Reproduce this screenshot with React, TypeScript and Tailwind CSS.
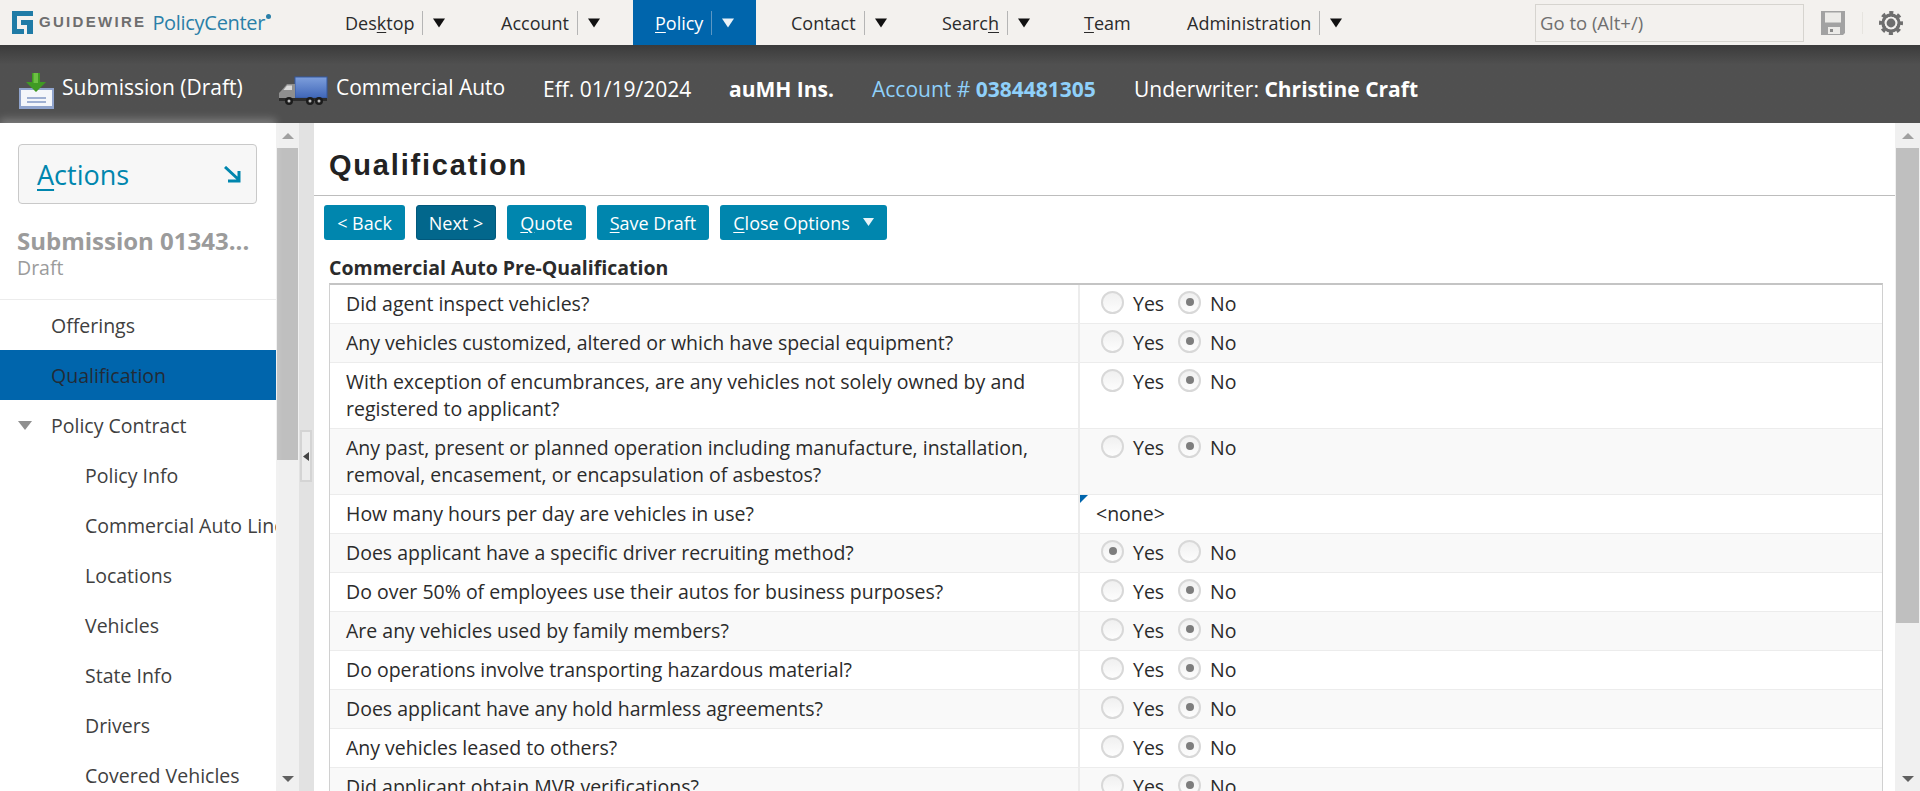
import React from "react";

const font = { fontFamily: '"Open Sans", "Noto Sans", sans-serif' };

function Arrow({ white = false }: { white?: boolean }) {
  return (
    <svg width="12" height="10" viewBox="0 0 12 10" className="block">
      <path d="M0 0.5H12L6 9.5Z" fill={white ? "#eaf2f8" : "#111"} />
    </svg>
  );
}

function NavItem({ pre, u, post, w, menu = true, active = false }: { pre: string; u: string; post: string; w: string; menu?: boolean; active?: boolean }) {
  return (
    <div className={`${w} ${active ? "bg-[#0065ac] text-white" : "text-[#2b2b2b]"} flex h-[45px] shrink-0 items-center text-[18px]`}>
      <span className="whitespace-nowrap pt-[1px]">
        {pre}
        <span className="underline underline-offset-2">{u}</span>
        {post}
      </span>
      {menu && (
        <>
          <span className={`${active ? "bg-[#5c97c4]" : "bg-[#b5b5b5]"} ml-[8px] mr-[10px] h-6 w-px`} />
          <Arrow white={active} />
        </>
      )}
    </div>
  );
}

function GLogo() {
  return (
    <svg width="21" height="23" viewBox="0 0 21 23" className="shrink-0">
      <path d="M0 0H21V5H5V18H12V23H0Z" fill="#1f7ba6" />
      <path d="M9 9H21V23H15V14H9Z" fill="#1f7ba6" />
    </svg>
  );
}

function SubmissionIcon() {
  return (
    <svg width="37" height="37" viewBox="0 0 37 37" className="shrink-0">
      <rect x="1" y="16" width="35" height="21" fill="#8fa3cc" />
      <rect x="3" y="18" width="31" height="16" fill="#f4f6fa" />
      <rect x="9" y="25" width="19" height="2" fill="#9fb0d2" />
      <rect x="9" y="29" width="19" height="2" fill="#9fb0d2" />
      <path d="M14 1H22V10H28L18 20L8 10H14Z" fill="#3f9a23" />
      <path d="M15.5 1H20V11H15.5Z" fill="#6cc043" />
    </svg>
  );
}

function TruckIcon() {
  return (
    <svg width="50" height="29" viewBox="0 0 50 29" className="shrink-0">
      <defs>
        <linearGradient id="box" x1="0" y1="0" x2="0" y2="1">
          <stop offset="0" stopColor="#7e9fdc" />
          <stop offset="1" stopColor="#3f66b8" />
        </linearGradient>
      </defs>
      <rect x="17" y="1" width="32" height="21" fill="url(#box)" stroke="#35589f" strokeWidth="1" />
      <path d="M17 8H9L3 15L1 17V25H17Z" fill="#8f8f8f" />
      <path d="M9 9.5H14V14H5.5Z" fill="#d9d9d9" />
      <rect x="1" y="22" width="48" height="3" fill="#2c2c2c" />
      <circle cx="11" cy="25" r="4" fill="#1b1b1b" />
      <circle cx="11" cy="25" r="1.5" fill="#bbb" />
      <circle cx="32" cy="25" r="4" fill="#1b1b1b" />
      <circle cx="32" cy="25" r="1.5" fill="#bbb" />
      <circle cx="41" cy="25" r="4" fill="#1b1b1b" />
      <circle cx="41" cy="25" r="1.5" fill="#bbb" />
    </svg>
  );
}

function GearIcon() {
  return (
    <svg width="24" height="24" viewBox="0 0 24 24" className="block">
      <circle cx="12" cy="12" r="10.5" fill="none" stroke="#6e6e6e" strokeWidth="3" strokeDasharray="4.12 4.12" strokeDashoffset="2.06" />
      <circle cx="12" cy="12" r="8" fill="none" stroke="#6e6e6e" strokeWidth="3.4" />
      <circle cx="12" cy="12" r="6.3" fill="#f3f1ee" />
      <circle cx="12" cy="12" r="4.4" fill="#6e6e6e" />
    </svg>
  );
}

function SaveIcon() {
  return (
    <svg width="24" height="24" viewBox="0 0 24 24" className="block">
      <path d="M0 0H24V22L22 24H0Z" fill="#a2a2a2" />
      <rect x="4" y="1.5" width="16" height="10" fill="#ecebe8" />
      <rect x="7" y="16" width="12" height="7" fill="#ecebe8" />
      <rect x="9" y="18" width="3" height="3" fill="#8a8a8a" />
    </svg>
  );
}

function Scrollbar({ thumbClass, w }: { thumbClass: string; w: string }) {
  return (
    <div className={`${w} flex h-full shrink-0 flex-col bg-[#f0f0f0]`}>
      <div className="flex h-[25px] shrink-0 items-center justify-center">
        <svg width="12" height="6" viewBox="0 0 12 6">
          <path d="M6 0L12 6H0Z" fill="#a0a0a0" />
        </svg>
      </div>
      <div className={`${thumbClass} mx-[1px] bg-[#bfbfbf]`} />
      <div className="flex-1" />
      <div className="flex h-[25px] shrink-0 items-center justify-center">
        <svg width="12" height="6" viewBox="0 0 12 6">
          <path d="M0 0H12L6 6Z" fill="#606060" />
        </svg>
      </div>
    </div>
  );
}

function Radio({ on }: { on: boolean }) {
  return (
    <span className="-mt-[3px] flex h-[23px] w-[23px] shrink-0 items-center justify-center rounded-full border-2 border-[#d8d8d8] bg-gradient-to-b from-[#f0f0f0] to-[#fdfdfd]">
      {on && <span className="h-2 w-2 rounded-full bg-[#7d7d7d]" />}
    </span>
  );
}

function YesNo({ yes }: { yes: boolean }) {
  return (
    <div className="flex items-center pl-[21px] pt-[5px] text-[19.5px] leading-[27px] text-[#2b2b2b]">
      <Radio on={yes} />
      <span className="ml-[9px] w-[45px]">Yes</span>
      <Radio on={!yes} />
      <span className="ml-[9px]">No</span>
    </div>
  );
}

const rows: { q: React.ReactNode; a: "yes" | "no" | "none"; h: string }[] = [
  { q: "Did agent inspect vehicles?", a: "no", h: "h-[39px]" },
  { q: "Any vehicles customized, altered or which have special equipment?", a: "no", h: "h-[39px]" },
  { q: <>With exception of encumbrances, are any vehicles not solely owned by and<br />registered to applicant?</>, a: "no", h: "h-[66px]" },
  { q: <>Any past, present or planned operation including manufacture, installation,<br />removal, encasement, or encapsulation of asbestos?</>, a: "no", h: "h-[66px]" },
  { q: "How many hours per day are vehicles in use?", a: "none", h: "h-[39px]" },
  { q: "Does applicant have a specific driver recruiting method?", a: "yes", h: "h-[39px]" },
  { q: "Do over 50% of employees use their autos for business purposes?", a: "no", h: "h-[39px]" },
  { q: "Are any vehicles used by family members?", a: "no", h: "h-[39px]" },
  { q: "Do operations involve transporting hazardous material?", a: "no", h: "h-[39px]" },
  { q: "Does applicant have any hold harmless agreements?", a: "no", h: "h-[39px]" },
  { q: "Any vehicles leased to others?", a: "no", h: "h-[39px]" },
  { q: "Did applicant obtain MVR verifications?", a: "no", h: "h-[39px]" },
];

function TealButton({ children, w, dark = false }: { children: React.ReactNode; w: string; dark?: boolean }) {
  return (
    <div className={`${w} ${dark ? "border border-[#01587c] bg-[#02678c]" : "bg-[#0086ae]"} flex h-[35px] shrink-0 items-center justify-center rounded-[3px] pt-[1px] text-[18px] text-white`}>
      {children}
    </div>
  );
}

function SideItem({ label, indent, active = false, caret = false }: { label: string; indent: string; active?: boolean; caret?: boolean }) {
  return (
    <div className={`${active ? "bg-[#0065ac] text-[#222b36]" : "text-[#404040]"} ${indent} relative flex h-[50px] shrink-0 items-center whitespace-nowrap pt-[2px] text-[19.5px]`}>
      {caret && (
        <svg width="14" height="9" viewBox="0 0 14 9" className="absolute left-[18px] top-[21px]">
          <path d="M0 0H14L7 9Z" fill="#8f8f8f" />
        </svg>
      )}
      {label}
    </div>
  );
}

export default function App() {
  return (
    <div className="flex h-screen w-full flex-col overflow-hidden bg-white" style={font}>
      {/* Top navigation */}
      <header className="flex h-[45px] shrink-0 items-center bg-[#f3f1ee]">
        <div className="flex w-[345px] shrink-0 items-center pl-[12px]">
          <GLogo />
          <span className="ml-[6px] text-[15px] font-bold tracking-[2.3px] text-[#6e6e6e]" style={{ fontFamily: '"Liberation Sans", sans-serif' }}>
            GUIDEWIRE
          </span>
          <span className="ml-[6px] text-[20px] tracking-[-0.3px] text-[#2a7fa8]">PolicyCenter</span>
          <span className="mb-[12px] ml-[1px] h-[5px] w-[5px] rounded-full bg-[#2a7fa8]" />
        </div>
        <NavItem pre="Des" u="k" post="top" w="w-[156px]" />
        <NavItem pre="Account" u="" post="" w="w-[132px]" />
        <NavItem pre="" u="P" post="olicy" w="w-[123px] pl-[22px]" active />
        <NavItem pre="Contact" u="" post="" w="w-[186px] pl-[35px]" />
        <NavItem pre="Searc" u="h" post="" w="w-[142px]" />
        <NavItem pre="" u="T" post="eam" w="w-[103px]" menu={false} />
        <NavItem pre="Administration" u="" post="" w="w-[348px]" />
        <div className="flex h-[38px] w-[269px] shrink-0 items-center border border-[#d6d4cf] pl-[4px] text-[18.5px] text-[#6f6f6f]">Go to (Alt+/)</div>
        <div className="ml-[17px] shrink-0">
          <SaveIcon />
        </div>
        <span className="ml-[17px] h-[22px] w-px bg-[#e6e4df]" />
        <div className="ml-[16px] shrink-0">
          <GearIcon />
        </div>
      </header>

      {/* Info bar */}
      <div className="flex h-[78px] shrink-0 items-center bg-gradient-to-b from-[#3b3b3b] via-[#505050] via-[25%] to-[#505050] pt-[12px] text-[21px] text-white">
        <div className="flex w-[278px] shrink-0 items-center pl-[18px]">
          <SubmissionIcon />
          <span className="-mt-[4px] ml-[7px] whitespace-nowrap">Submission (Draft)</span>
        </div>
        <div className="flex w-[265px] shrink-0 items-center">
          <TruckIcon />
          <span className="-mt-[4px] ml-[8px] whitespace-nowrap">Commercial Auto</span>
        </div>
        <span className="w-[186px] shrink-0 whitespace-nowrap">Eff. 01/19/2024</span>
        <span className="w-[143px] shrink-0 whitespace-nowrap font-bold">auMH Ins.</span>
        <span className="w-[262px] shrink-0 whitespace-nowrap text-[#8fd0fa]">
          Account # <b>0384481305</b>
        </span>
        <span className="whitespace-nowrap">
          Underwriter: <b>Christine Craft</b>
        </span>
      </div>

      {/* Body */}
      <div className="flex min-h-0 flex-1">
        {/* Sidebar */}
        <aside className="relative flex w-[276px] shrink-0 flex-col shadow-[0_-4px_8px_rgba(255,255,255,0.25)]">
          <div className="overflow-hidden">
            <div className="pl-[18px] pr-[19px] pt-[21px]">
              <div className="flex h-[60px] items-center justify-between rounded-[4px] border border-[#c9c9c9] bg-[#f7f7f7] pl-[18px] pr-[14px] pt-[2px]">
                <span className="text-[27px] text-[#0086ae]">
                  <span className="underline underline-offset-4">A</span>ctions
                </span>
                <svg width="18" height="18" viewBox="0 0 18 18">
                  <path d="M1 1L14 13M15 5V15H4" fill="none" stroke="#0086ae" strokeWidth="3" />
                </svg>
              </div>
            </div>
            <div className="flex h-[96px] shrink-0 flex-col border-b border-[#ececec] pl-[17px] pt-[22px]">
              <span className="whitespace-nowrap text-[24px] font-bold leading-[30px] text-[#9b9b9b]">Submission 01343...</span>
              <span className="text-[19.5px] leading-[24px] text-[#9b9b9b]">Draft</span>
            </div>
            <SideItem label="Offerings" indent="pl-[51px]" />
            <SideItem label="Qualification" indent="pl-[51px]" active />
            <SideItem label="Policy Contract" indent="pl-[51px]" caret />
            <SideItem label="Policy Info" indent="pl-[85px]" />
            <SideItem label="Commercial Auto Line" indent="pl-[85px]" />
            <SideItem label="Locations" indent="pl-[85px]" />
            <SideItem label="Vehicles" indent="pl-[85px]" />
            <SideItem label="State Info" indent="pl-[85px]" />
            <SideItem label="Drivers" indent="pl-[85px]" />
            <SideItem label="Covered Vehicles" indent="pl-[85px]" />
          </div>
        </aside>
        <Scrollbar thumbClass="h-[312px]" w="w-[23px]" />

        {/* Splitter */}
        <div className="relative w-[15px] shrink-0 bg-[#e2e2e2]">
          <div className="absolute left-[1px] top-[307px] flex h-[52px] w-[12px] items-center justify-center border-2 border-[#d4d4d4] bg-[#ececec]">
            <svg width="6" height="9" viewBox="0 0 6 9">
              <path d="M6 0V9L0 4.5Z" fill="#444" />
            </svg>
          </div>
        </div>

        {/* Main */}
        <main className="flex min-w-0 flex-1 flex-col overflow-hidden">
          <div className="flex h-[73px] shrink-0 items-center border-b border-[#bdbdbd] pl-[15px] pt-[14px]">
            <h1 className="text-[29px] font-bold tracking-[1.8px] text-[#222]" style={{ fontFamily: '"Liberation Sans", sans-serif' }}>
              Qualification
            </h1>
          </div>
          <div className="flex shrink-0 gap-[11px] pl-[10px] pt-[9px]">
            <TealButton w="w-[81px]">&lt; Back</TealButton>
            <TealButton w="w-[80px]" dark>Next &gt;</TealButton>
            <TealButton w="w-[79px]">
              <span><span className="underline underline-offset-2">Q</span>uote</span>
            </TealButton>
            <TealButton w="w-[112px]">
              <span><span className="underline underline-offset-2">S</span>ave Draft</span>
            </TealButton>
            <TealButton w="w-[167px]">
              <span><span className="underline underline-offset-2">C</span>lose Options</span>
              <span className="mb-[3px] ml-[13px]">
                <svg width="11" height="8" viewBox="0 0 11 8" className="block">
                  <path d="M0 0H11L5.5 8Z" fill="#e8f4f8" />
                </svg>
              </span>
            </TealButton>
          </div>
          <div className="pl-[15px] pt-[16px] text-[19.5px] font-bold leading-[24px] text-[#2b2b2b]">Commercial Auto Pre-Qualification</div>
          <div className="ml-[15px] mr-[12px] mt-[3px] shrink-0 border-l border-r border-t-2 border-[#d0d0d0] border-t-[#c4c4c4]">
            {rows.map((r, i) => (
              <div key={i} className={`${r.h} ${i % 2 === 1 ? "bg-[#f9f9f9]" : "bg-white"} flex border-b border-[#ececec]`}>
                <div className="w-[750px] shrink-0 border-r-2 border-[#ececec] pl-[16px] pt-[5px] text-[19.5px] leading-[27px] text-[#2b2b2b]">{r.q}</div>
                <div className="relative flex-1">
                  {r.a === "none" ? (
                    <>
                      <svg width="8" height="8" viewBox="0 0 8 8" className="absolute left-0 top-0">
                        <path d="M0 0H8L0 8Z" fill="#0065ac" />
                      </svg>
                      <div className="pl-[16px] pt-[5px] text-[19.5px] leading-[27px] text-[#2b2b2b]">&lt;none&gt;</div>
                    </>
                  ) : (
                    <YesNo yes={r.a === "yes"} />
                  )}
                </div>
              </div>
            ))}
          </div>
        </main>
        <Scrollbar thumbClass="h-[475px]" w="w-[25px]" />
      </div>
    </div>
  );
}
